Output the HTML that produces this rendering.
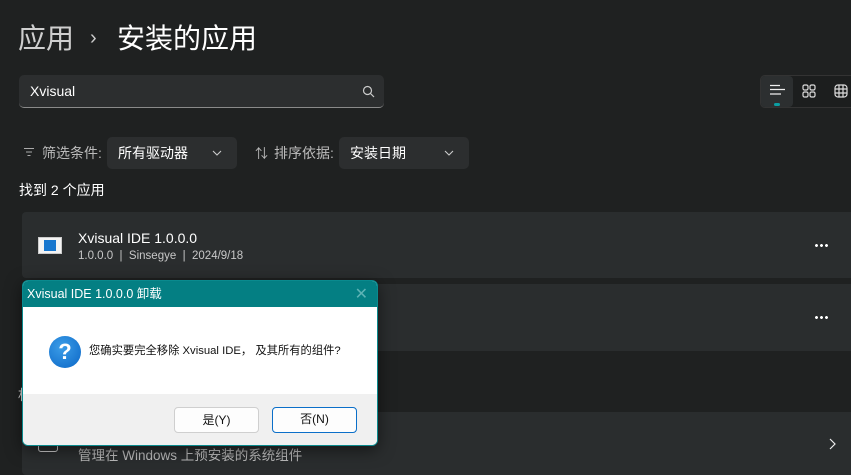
<!DOCTYPE html>
<html><head><meta charset="utf-8"><style>
*{margin:0;padding:0;box-sizing:border-box}
body{width:851px;height:475px;overflow:hidden;background:#1f2121;font-family:"Liberation Sans","Noto Sans CJK SC",sans-serif;color:#fff;position:relative}
.a{position:absolute}
.card{position:absolute;left:22px;right:0;background:#2a2d2e;border-radius:4px 0 0 4px}
.dd{position:absolute;background:#2c2e2f;border-radius:5px;font-size:14px;line-height:32px;padding-left:11px}
.dots{position:absolute;width:14px;height:3px;background:radial-gradient(circle,#fff 1.3px,transparent 1.6px) 0 0/5px 3px repeat-x}
</style></head><body>
<div class="a" style="left:18px;top:20px;font-size:28px;color:#cfcfcf;line-height:38px">应用</div>
<div class="a" style="left:90px;top:22px;font-size:20px;color:#ccc;line-height:32px">›</div>
<div class="a" style="left:117px;top:20px;font-size:28px;line-height:38px">安装的应用</div>

<div class="a" style="left:19px;top:75px;width:365px;height:33px;background:#2c2e2f;border-radius:5px;border-bottom:1px solid #8a8a8a"></div>
<div class="a" style="left:30px;top:82px;font-size:14px;line-height:18px">Xvisual</div>
<svg class="a" style="left:362px;top:85px" width="13" height="13" viewBox="0 0 13 13"><circle cx="5.5" cy="5.5" r="4" fill="none" stroke="#ccc" stroke-width="1.2"/><path d="M8.5 8.5L12 12" stroke="#ccc" stroke-width="1.2"/></svg>

<div class="a" style="left:760px;top:75px;width:100px;height:33px;border:1px solid #333;border-radius:5px;background:#1c1e1e"></div>
<div class="a" style="left:761px;top:76px;width:32px;height:31px;background:#2c2f30;border-radius:4px"></div>
<svg class="a" style="left:769px;top:84px" width="16" height="12"><path d="M1 1.5H11M1 5.5H16M1 10H12" stroke="#eee" stroke-width="1.2"/></svg>
<div class="a" style="left:774px;top:103px;width:6px;height:3px;background:#0b9ea2;border-radius:2px"></div>
<svg class="a" style="left:802px;top:84px" width="14" height="14" fill="none" stroke="#ddd" stroke-width="1.2"><rect x="1" y="1" width="5" height="5" rx="1.5"/><rect x="8" y="1" width="5" height="5" rx="1.5"/><rect x="1" y="8" width="5" height="5" rx="1.5"/><rect x="8" y="8" width="5" height="5" rx="1.5"/></svg>
<svg class="a" style="left:834px;top:84px" width="14" height="14" fill="none" stroke="#ddd" stroke-width="1.2"><rect x="1" y="1" width="12" height="12" rx="3"/><path d="M5 1V13M9 1V13M1 5H13M1 9H13"/></svg>

<svg class="a" style="left:23px;top:147px" width="12" height="10"><path d="M1 1.5H11M3 5H9M4.5 8.5H7.5" stroke="#aaa" stroke-width="1"/></svg>
<div class="a" style="left:42px;top:144px;font-size:14px;color:#bbb;line-height:18px">筛选条件:</div>
<div class="dd" style="left:107px;top:137px;width:130px;height:32px">所有驱动器</div>
<svg class="a" style="left:212px;top:150px" width="10" height="6"><path d="M1 1L5 5L9 1" fill="none" stroke="#ccc" stroke-width="1.1"/></svg>
<div class="a" style="left:255px;top:143px;font-size:13px;color:#bbb">⇅</div>
<div class="a" style="left:274px;top:144px;font-size:14px;color:#bbb;line-height:18px">排序依据:</div>
<div class="dd" style="left:339px;top:137px;width:130px;height:32px">安装日期</div>
<svg class="a" style="left:444px;top:150px" width="10" height="6"><path d="M1 1L5 5L9 1" fill="none" stroke="#ccc" stroke-width="1.1"/></svg>

<div class="a" style="left:19px;top:181px;font-size:14px;line-height:18px">找到 2 个应用</div>

<div class="card" style="top:212px;height:66px"></div>
<div class="a" style="left:38px;top:237px;width:24px;height:17px;background:#f4f4f4;border:1px solid #ccc"></div>
<div class="a" style="left:44px;top:240px;width:12px;height:11px;background:#1777cf"></div>
<div class="a" style="left:78px;top:229px;font-size:14px;line-height:18px">Xvisual IDE 1.0.0.0</div>
<div class="a" style="left:78px;top:249px;font-size:11.5px;color:#c8c8c8;line-height:15px">1.0.0.0 &nbsp;| &nbsp;Sinsegye &nbsp;| &nbsp;2024/9/18</div>
<div class="dots" style="left:814px;top:244px"></div>

<div class="card" style="top:284px;height:67px"></div>
<div class="dots" style="left:814px;top:316px"></div>

<div class="a" style="left:18px;top:385px;font-size:14px;color:#ddd">相</div>
<div class="card" style="top:412px;height:63px"></div>
<div class="a" style="left:38px;top:438px;width:20px;height:14px;border:1.5px solid #ccc;border-radius:3px"></div>
<div class="a" style="left:78px;top:447px;font-size:13.5px;color:#bbb;line-height:17px">管理在 Windows 上预安装的系统组件</div>
<svg class="a" style="left:829px;top:438px" width="7" height="12"><path d="M1 1L6 6L1 11" fill="none" stroke="#eee" stroke-width="1.2"/></svg>

<div class="a" style="left:22px;top:280px;width:356px;height:166px;border:1px solid #0a8a8e;border-radius:6px;overflow:hidden;background:#fff;box-shadow:0 4px 16px rgba(0,0,0,.5)">
 <div style="height:26px;background:#047f83;color:#fff;font-size:12.5px;line-height:26px;padding-left:4px">Xvisual IDE 1.0.0.0 卸载</div>
 <div style="position:absolute;right:9px;top:3px;color:#5db3b5;font-size:16px">✕</div>
 <div style="position:absolute;left:26px;top:55px;width:32px;height:32px;border-radius:50%;background:radial-gradient(circle at 40% 35%,#3b9de8,#0b66c6);color:#fff;font-size:22px;font-weight:bold;text-align:center;line-height:32px">?</div>
 <div style="position:absolute;left:66px;top:62px;font-size:11.3px;color:#111;line-height:17px;white-space:nowrap">您确实要完全移除 Xvisual IDE， 及其所有的组件?</div>
 <div style="position:absolute;left:0;right:0;top:113px;bottom:0;background:#f0f0f0"></div>
 <div style="position:absolute;left:151px;top:126px;width:85px;height:26px;background:#fdfdfd;border:1px solid #cfcfcf;border-radius:4px;color:#111;font-size:12px;text-align:center;line-height:24px">是(Y)</div>
 <div style="position:absolute;left:249px;top:126px;width:85px;height:26px;background:#fdfdfd;border:1.5px solid #0b6fc9;border-radius:4px;color:#111;font-size:12px;text-align:center;line-height:23px">否(N)</div>
</div>
</body></html>
